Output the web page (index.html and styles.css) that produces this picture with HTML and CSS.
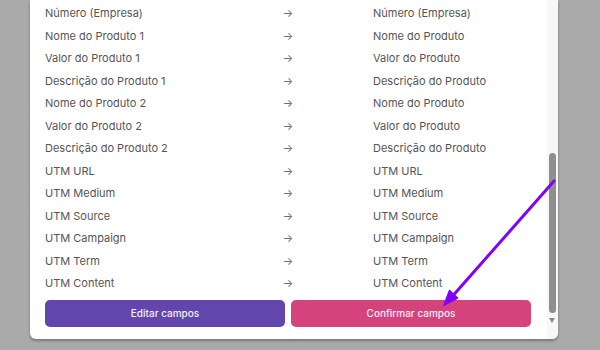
FILE: index.html
```html
<!DOCTYPE html>
<html lang="pt-BR">
<head>
  <meta charset="UTF-8">
  <meta name="viewport" content="width=device-width, initial-scale=1.0">
  <title>Mapeamento de campos</title>
  <link rel="stylesheet" href="styles.css">
</head>
<body>
  <div class="modal">
    <div class="content">
      <!-- Field mapping list -->
      <div class="mapping">
        <div class="row"><span>Número (Empresa)</span><span class="arrow">→</span><span class="target">Número (Empresa)</span></div>
        <div class="row"><span>Nome do Produto 1</span><span class="arrow">→</span><span class="target">Nome do Produto</span></div>
        <div class="row"><span>Valor do Produto 1</span><span class="arrow">→</span><span class="target">Valor do Produto</span></div>
        <div class="row"><span>Descrição do Produto 1</span><span class="arrow">→</span><span class="target">Descrição do Produto</span></div>
        <div class="row"><span>Nome do Produto 2</span><span class="arrow">→</span><span class="target">Nome do Produto</span></div>
        <div class="row"><span>Valor do Produto 2</span><span class="arrow">→</span><span class="target">Valor do Produto</span></div>
        <div class="row"><span>Descrição do Produto 2</span><span class="arrow">→</span><span class="target">Descrição do Produto</span></div>
        <div class="row"><span>UTM URL</span><span class="arrow">→</span><span class="target">UTM URL</span></div>
        <div class="row"><span>UTM Medium</span><span class="arrow">→</span><span class="target">UTM Medium</span></div>
        <div class="row"><span>UTM Source</span><span class="arrow">→</span><span class="target">UTM Source</span></div>
        <div class="row"><span>UTM Campaign</span><span class="arrow">→</span><span class="target">UTM Campaign</span></div>
        <div class="row"><span>UTM Term</span><span class="arrow">→</span><span class="target">UTM Term</span></div>
        <div class="row"><span>UTM Content</span><span class="arrow">→</span><span class="target">UTM Content</span></div>
      </div>

      <div class="actions">
        <button class="btn btn-edit">Editar campos</button>
        <button class="btn btn-confirm">Confirmar campos</button>
      </div>
    </div>

    <!-- Scrollbar -->
    <div class="scrollbar">
      <div class="thumb"></div>
      <div class="scroll-down"></div>
    </div>
  </div>

  <!-- Annotation arrow -->
  <svg class="annotation" width="600" height="350" viewBox="0 0 600 350">
    <line x1="554" y1="181" x2="450" y2="299" stroke="#7f00ff" stroke-width="3" stroke-linecap="round"/>
    <polygon points="444,305 457.5,298 449.5,290.5" fill="#7f00ff" stroke="#7f00ff" stroke-width="1.5" stroke-linejoin="round"/>
  </svg>
</body>
</html>
```

FILE: styles.css
```css
body {
  margin: 0;
  background-color: #aaaaaa;
  font-family: Inter, "Noto Sans", sans-serif;
  width: 600px;
  height: 350px;
  overflow: hidden;
  position: relative;
}
.modal {
  display: flex;
  width: 528px;
  height: 339px;
  margin-left: 30px;
  background-color: white;
  border-radius: 0 0 6px 6px;
  box-shadow: 0 2px 3px rgba(0, 0, 0, 0.3);
}
.content {
  flex: 1;
  padding: 2px 16px 0 15px;
}
.row {
  display: grid;
  grid-template-columns: 1fr 1fr 1fr;
  height: 22.5px;
  align-items: center;
  font-size: 11px;
  color: #555;
}
.arrow {
  text-align: center;
  color: #707070;
}
.target {
  padding-left: 4px;
}
.actions {
  display: flex;
  gap: 6px;
  margin-top: 5px;
}
.btn {
  flex: 1;
  height: 27px;
  border: none;
  border-radius: 5px;
  font-family: Inter, "Noto Sans", sans-serif;
  font-size: 10px;
  font-weight: 500;
  color: #f2eef8;
  cursor: pointer;
}
.btn-edit {
  background-color: #6246ad;
}
.btn-confirm {
  background-color: #d4437b;
}
.scrollbar {
  width: 11px;
  background-color: #f7f7f7;
  position: relative;
  border-radius: 0 0 6px 0;
}
.thumb {
  position: absolute;
  left: 2px;
  top: 153px;
  width: 7px;
  height: 160px;
  border-radius: 4px;
  background-color: #8f8f8f;
}
.scroll-down {
  position: absolute;
  left: 2px;
  top: 318px;
  width: 0;
  height: 0;
  border-left: 3.5px solid transparent;
  border-right: 3.5px solid transparent;
  border-top: 5px solid #888;
}
.annotation {
  position: absolute;
  left: 0;
  top: 0;
}
```
